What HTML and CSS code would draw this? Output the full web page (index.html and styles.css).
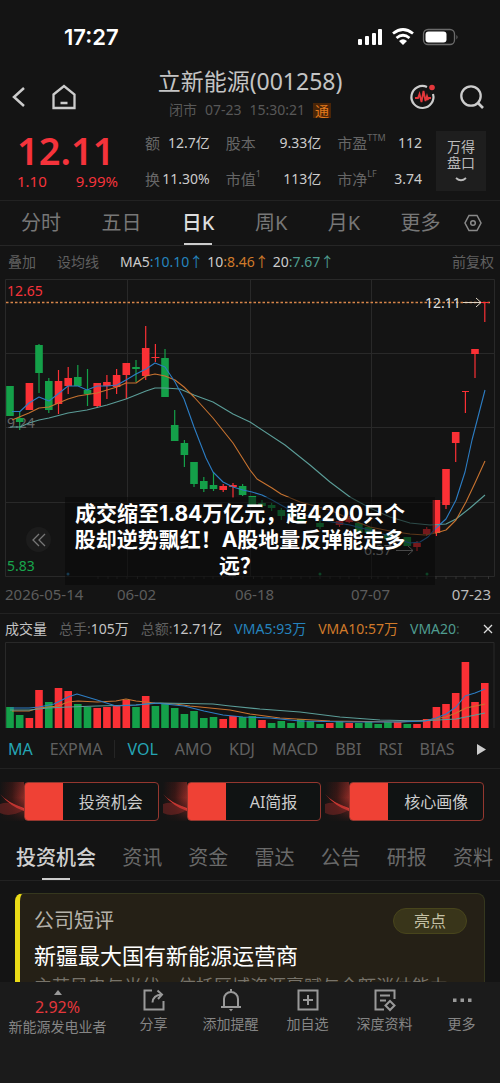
FILE: index.html
```html
<!DOCTYPE html>
<html lang="zh-CN">
<head>
<meta charset="utf-8">
<meta name="viewport" content="width=device-width, initial-scale=1">
<title>立新能源(001258)</title>
<link rel="stylesheet" href="styles.css">
</head>
<body>
<div class="app">
  <div class="status">
    <span class="clock">17:27</span>
    <svg class="status-icons" width="102" height="20" viewBox="0 0 102 20" aria-hidden="true">
      <g fill="#fff">
        <rect x="1" y="12" width="4" height="6" rx="1"/><rect x="8" y="9" width="4" height="9" rx="1"/><rect x="15" y="6" width="4" height="12" rx="1"/><rect x="21" y="2" width="4" height="16" rx="1"/>
        <path d="M46 18l-4-4q4-3.400 8 0z"/>
      </g>
      <path d="M36 6.500q10-8 20 0M39.500 11q6.500-5.500 13 0" fill="none" stroke="#fff" stroke-width="2.800"/>
      <rect x="66.500" y="2.500" width="31" height="15" rx="4.500" fill="none" stroke="#6b6b6b" stroke-width="1.300"/>
      <rect x="68.500" y="4.500" width="21" height="11" rx="3" fill="#fff"/>
      <path d="M99.500 8q2 2 0 4.500z" fill="#777"/>
    </svg>
  </div>

  <header class="header">
    <div class="side">
      <button class="icon-btn" aria-label="返回"><svg width="14" height="22" viewBox="0 0 14 22"><path d="M12 2L2 11l10 9" fill="none" stroke="#ccc" stroke-width="2.500"/></svg></button>
      <button class="icon-btn" aria-label="首页"><svg width="26" height="26" viewBox="0 0 26 26"><path d="M2.500 10.500L13 2l10.500 8.500V24h-21zM9.500 19h7" fill="none" stroke="#ccc" stroke-width="2.300"/></svg></button>
    </div>
    <div class="heading">
      <h1>立新能源(001258)</h1>
      <p><span>闭市</span><span>07-23</span><span>15:30:21</span><b>通</b></p>
    </div>
    <div class="side right">
      <button class="icon-btn" aria-label="异动"><svg width="28" height="28" viewBox="0 0 28 28"><path d="M18 4A11 11 0 1 0 24 11" fill="none" stroke="#ccc" stroke-width="2.200"/><path d="M6 15h3l1.500-4 2 8 2-11 2 10 1.500-5 1 3 1-1h2" fill="none" stroke="#e4373b" stroke-width="1.800"/><circle cx="23" cy="4.500" r="2.800" fill="#e4373b"/></svg></button>
      <button class="icon-btn" aria-label="搜索"><svg width="26" height="26" viewBox="0 0 26 26"><circle cx="12" cy="12" r="9.700" fill="none" stroke="#ccc" stroke-width="2.300"/><path d="M18.500 18.500L24 24" stroke="#ccc" stroke-width="2.600"/></svg></button>
    </div>
  </header>

  <section class="quote">
    <div class="price">
      <strong>12.11</strong>
      <div class="change"><span>1.10</span><span>9.99%</span></div>
    </div>
    <dl class="stats">
      <div><dt>额</dt><dd>12.7亿</dd></div>
      <div><dt>股本</dt><dd>9.33亿</dd></div>
      <div><dt>市盈<sup>TTM</sup></dt><dd>112</dd></div>
      <div><dt>换</dt><dd>11.30%</dd></div>
      <div><dt>市值<sup>1</sup></dt><dd>113亿</dd></div>
      <div><dt>市净<sup>LF</sup></dt><dd>3.74</dd></div>
    </dl>
    <button class="panel-btn">万得<br>盘口<svg width="12" height="6" viewBox="0 0 12 6"><path d="M1 1q5 4.500 10 0" fill="none" stroke="#bbb" stroke-width="1.800"/></svg></button>
  </section>

  <nav class="periods">
    <button>分时</button><button>五日</button><button class="on">日K</button><button>周K</button><button>月K</button><button>更多</button>
    <button class="gear" aria-label="设置"><svg width="18" height="18" viewBox="0 0 18 18" fill="none" stroke="#8a8a8a" stroke-width="1.500"><path d="M5 1.500h8L17 9l-4 7.500H5L1 9z"/><circle cx="9" cy="9" r="2.300"/></svg></button>
  </nav>

  <div class="ma-row">
    <button>叠加</button><button>设均线</button>
    <p><span>MA5<i class="blue">:10.10↑</i></span><span>10<i class="orange">:8.46↑</i></span><span>20<i class="teal">:7.67↑</i></span></p>
    <button class="push">前复权</button>
  </div>

  <section class="kline">
    <svg class="plot" viewBox="0 275 500 304" role="img" aria-label="日K线">
      <path class="grid" d="M5.500 279.500H494.500V576.500H5.500zM5.500 353.500H494.500M5.500 427.500H494.500M5.500 502.500H494.500M127.500 280V576M250.500 280V576M371.500 280V576"/>
      <text class="t red-t" x="7" y="296">12.65</text>
      <text class="t dim-t" x="7" y="428">9.24</text>
      <text class="t green-t" x="7" y="571">5.83</text>
      <path class="dash" d="M6 302.500H492"/>
      <g class="wick up"><path d="M58.500 370V414M68.200 367V394M97.200 383V408M106.900 375V399M116.600 369V394M126.300 363V399M145.700 326V380M155.400 344V362M223.200 484V492M233 483V498M339.500 519V527M349.200 516V523M417 541V551M426.700 527V536M436.400 500V536M446 469V509M455.700 432V462M465.400 391V413M475 349V378M484.800 302V322M151.400 357.500h8M462 391.500h7M481 302.500h8"/></g>
      <g class="wick down"><path d="M19.700 412V430M39 344V393M48.800 378V413M77.800 365V386M87.500 369V406M136 360V382M165 349V397M174.700 410V441M184.400 440V467M194 462V487M203.800 477V492M213.500 472V491M242.600 484V496M262 500V508M271.600 503V511M281.300 508V520M320 521V529M358.800 523V534"/></g>
      <path class="body up" d="M29.400 383V410M58.500 381V404M68.200 378V386M97.200 383V406M106.900 382V386M116.600 375V387M126.300 363V375M145.700 348V376M223.200 486V490M233 485V487M339.500 521V525M349.200 518V522M417 543V547M426.700 529V534M436.400 500V533M446 469V505M455.700 432V443M475 349V354"/>
      <path class="body down" d="M10 386V416M19.700 418V422M39 345V373M48.800 381V410M77.800 377V386M87.500 390V394M136 367V369M165 358V397M174.700 425V441M184.400 443V455M194 462V484M203.800 481V489M213.500 485V489M242.600 486V495M252.300 496V505M262 503V506M271.600 505V508M281.300 510V516M291 513V517M300.700 517V521M320 523V527M358.800 523V533M368.500 527V533M387.900 534V539M407.300 537V546"/>
      <path class="line teal-l" d="M10 427L20 427L29 423L39 420L49 418L68 413L87 410L107 405L126 399L146 391L155 388L165 388L180 389L194 395L213 402L233 414L250 422L285 445L310 465L330 482L350 497L370 508L390 517L410 523L430 525L446 524L456 519L470 508L485 495"/>
      <path class="line orange-l" d="M12 420L29 413L39 408L49 407L68 399L78 396L97 393L117 387L126 383L136 383L146 376L155 374L165 376L175 380L184 387L194 397L204 408L213 418L233 443L250 470L257 479L272 488L281 494L300 502L330 510L352 520L370 527L390 531L410 534L425 535L436 533L446 530L456 520L466 502L475 483L485 461"/>
      <path class="line blue-l" d="M12 411.500H20L29 403L39 397L49 401L58 394L68 386H78L87 390L97 386H107L117 385L126 380L136 374L146 369L155 363L165 367L175 382L184 399L194 427L199 440L206 458L213 472L223 482L233 487L243 490L252 492L262 495L272 500L290 510L320 520L350 525L380 533L400 540L410 543L420 542L428 537L436 528L446 519L456 500L465 472L472 440L485 390"/>
      <text class="t light-t" x="425" y="308">12.11</text>
      <path class="arrow" d="M463 302.500H481M476 298L481 302.500L476 307"/>
      <text class="t gray-t" x="364" y="555">6.37</text>
      <path class="arrow dim" d="M396 550.500H413M408 546L413 550.500L408 555"/>
      <g class="ticks"><path d="M98 576V581M108 576V581M117 576V581M127 576V581M137.500 576V582M146 576V581M156 576V581M165 576V581M175 576V581M184 576V581M194 576V581M204 576V581M213 576V581M223 576V581M233 576V581M243 576V581M253.500 576V582M262 576V581M272 576V581M281 576V581M291 576V581M301 576V581M310 576V581M320 576V581M330 576V581M340 576V581M349 576V581M359 576V581M371.500 576V582M378 576V581M388 576V581M398 576V581M407 576V581M417 576V581M427 576V581M436 576V581M446 576V581M456 576V581M465 576V581M475 576V581M488.500 576V582"/></g>
      <circle cx="68" cy="574" r="1.500" fill="#2878a8"/><circle cx="320" cy="574" r="1.500" fill="#148b4b"/><circle cx="427" cy="574" r="1.500" fill="#148b4b"/>
    </svg>
    <button class="back" aria-label="更早"><svg width="14" height="14" viewBox="0 0 14 14"><path d="M7 1L1 7l6 6M13 1L7 7l6 6" fill="none" stroke="#777" stroke-width="1.300"/></svg></button>
    <p class="caption">成交缩至1.84万亿元，超4200只个<br>股却逆势飘红！A股地量反弹能走多<br>远？</p>
    <div class="dates"><span>2026-05-14</span><span>06-02</span><span>06-18</span><span>07-07</span><span class="last">07-23</span></div>
  </section>

  <section class="volume">
    <div class="vol-row">
      <span class="lit">成交量</span><span>总手:<em>105万</em></span><span>总额:<em>12.71亿</em></span><span class="blue">VMA5:93万</span><span class="orange">VMA10:57万</span><span class="teal">VMA20<i class="cut">:</i></span>
      <button aria-label="关闭"><svg width="10" height="10" viewBox="0 0 10 10"><path d="M1 1l8 8M9 1L1 9" stroke="#ddd" stroke-width="1.300"/></svg></button>
    </div>
    <svg class="plot" viewBox="0 641 500 89" role="img" aria-label="成交量">
      <path class="grid" d="M5.500 728V642.500H494V728"/>
      <path class="body down" d="M10 707V728M19.700 715V728M48.800 702V728M77.800 704V728M87.500 707V728M136 707V728M155.400 706V728M165 704V728M174.700 708V728M184.400 714V728M194 711V728M203.800 718V728M213.500 717V728M242.600 717V728M252.300 716V728M271.600 723V728M281.300 721V728M291 723V728M300.700 719V728M310.400 721V728M320 724V728M339.500 721V728M358.800 723V728M368.500 721V728M378.200 724V728M387.900 722V728M407.300 724V728"/>
      <path class="body up" d="M29.400 718V728M39 690V728M58.500 688V728M68.200 691V728M97.200 708V728M106.900 707V728M116.600 706V728M126.300 700V728M145.700 696V728M223.200 719V728M233 716V728M262 720V728M329.800 723V728M349.200 723V728M397.600 722V728M417 724V728M426.700 719V728M436.400 707V728M446 704V728M455.700 693V728M465.400 662V728M475 702V728M484.800 683V728"/>
      <path class="line orange-l" d="M12 711H29L39 708L58 706L68 702L78 701L97 702L116 701L126 699L136 701L155 703L175 704L190 706L210 708L230 710L250 714L280 718L330 721L400 722L428 720L446 717L456 713L466 708L485 704"/>
      <path class="line teal-l" d="M10 710L29 710L48 708L68 707L97 706L136 705L160 703L213 704L230 706L260 709L300 712L340 717L380 720L420 721L456 719L485 713"/>
      <path class="line blue-l" d="M10 708L29 708L39 707L54 704L68 697L77 694L87 697L97 700L116 706L136 705L155 703L184 706L204 711L223 715L243 717L270 718L300 721L350 722L400 722L425 721L436 718L446 714L456 707L465 696L475 693L485 689"/>
    </svg>
    <nav class="indicators">
      <button class="on">MA</button><button>EXPMA</button><span class="sep"></span><button class="on">VOL</button><button>AMO</button><button>KDJ</button><button>MACD</button><button>BBI</button><button>RSI</button><button>BIAS</button>
      <button class="more" aria-label="更多指标"><svg width="9" height="11" viewBox="0 0 9 11"><path d="M0 0l9 5.500L0 11z" fill="#ccc"/></svg></button>
    </nav>
  </section>

  <div class="promos">
    <div class="promo"><svg width="24" height="39" viewBox="0 0 24 39" aria-hidden="true"><defs><linearGradient id="glow"><stop offset="0" stop-color="#141414"/><stop offset=".5" stop-color="#3a1715"/><stop offset="1" stop-color="#8c2b26"/></linearGradient><linearGradient id="fade" x2="0" y2="1"><stop offset="0" stop-color="#141414" stop-opacity=".3"/><stop offset=".4" stop-color="#141414" stop-opacity="0"/><stop offset="1" stop-color="#141414" stop-opacity=".95"/></linearGradient></defs><path fill="url(#glow)" d="M0 0h24v39H0z"/><path fill="url(#fade)" d="M0 0h24v39H0z"/><path d="M0 12Q8 21 24 26V29Q11 25 0 12z" fill="#d33a34"/><path d="M0 22Q12 18 24 28Q10 36 0 31z" fill="#a52e2a" opacity=".4"/></svg><button>投资机会</button></div>
    <div class="promo"><svg width="24" height="39" viewBox="0 0 24 39" aria-hidden="true"><path fill="url(#glow)" d="M0 0h24v39H0z"/><path fill="url(#fade)" d="M0 0h24v39H0z"/><path d="M0 12Q8 21 24 26V29Q11 25 0 12z" fill="#d33a34"/><path d="M0 22Q12 18 24 28Q10 36 0 31z" fill="#a52e2a" opacity=".4"/></svg><button>AI简报</button></div>
    <div class="promo"><svg width="24" height="39" viewBox="0 0 24 39" aria-hidden="true"><path fill="url(#glow)" d="M0 0h24v39H0z"/><path fill="url(#fade)" d="M0 0h24v39H0z"/><path d="M0 12Q8 21 24 26V29Q11 25 0 12z" fill="#d33a34"/><path d="M0 22Q12 18 24 28Q10 36 0 31z" fill="#a52e2a" opacity=".4"/></svg><button>核心画像</button></div>
  </div>

  <nav class="sections">
    <button class="on">投资机会</button><button>资讯</button><button>资金</button><button>雷达</button><button>公告</button><button>研报</button><button>资料</button>
  </nav>

  <main class="feed">
    <article class="card">
      <div class="card-head"><h2>公司短评</h2><span class="badge">亮点</span></div>
      <h3>新疆最大国有新能源运营商</h3>
      <p>主营风电与光伏，依托区域资源禀赋与全额消纳能力</p>
    </article>
  </main>

  <footer class="toolbar">
    <button class="sector"><svg width="8" height="5" viewBox="0 0 8 5"><path d="M4 0l4 5H0z" fill="#999"/></svg><b>2.92%</b><span>新能源发电业者</span></button>
    <button><svg width="24" height="24" viewBox="0 0 24 24"><path d="M10 2.500H2.500v19h19V13M10.500 14.500Q11 7 20 6.500M15.500 2.500L20 6.500l-4 4.500" fill="none" stroke="#999" stroke-width="2"/></svg><span>分享</span></button>
    <button><svg width="24" height="24" viewBox="0 0 24 24"><path d="M2 19h20M5 19V11a7 7 0 0 1 14 0v8M12 4V1" fill="none" stroke="#999" stroke-width="2"/><path d="M10 21h4l-2 2.500z" fill="#999"/></svg><span>添加提醒</span></button>
    <button><svg width="24" height="24" viewBox="0 0 24 24"><path d="M2.500 2.500h19v19h-19zM12 7v10M7 12h10" fill="none" stroke="#999" stroke-width="2"/></svg><span>加自选</span></button>
    <button><svg width="24" height="24" viewBox="0 0 24 24"><path d="M21.500 11V2.500h-19v19H11M7 7.500h10M7 12.500h6M17 13l4.500 4.500L17 22l-4.500-4.500z" fill="none" stroke="#999" stroke-width="2"/></svg><span>深度资料</span></button>
    <button><svg width="24" height="24" viewBox="0 0 24 24"><path d="M3 10.500h3.500V14H3zM10.500 10.500H14V14h-3.500zM18 10.500h3.500V14H18z" fill="#999"/></svg><span>更多</span></button>
  </footer>
</div>
</body>
</html>
```
FILE: styles.css
```css
* { box-sizing: border-box; margin: 0; padding: 0; }
body {
  background: #141414;
  color: #ccc;
  font-family: "Noto Sans", "Noto Sans CJK SC", sans-serif;
  font-size: 14px;
  line-height: 20px;
}
button { background: none; border: 0; color: inherit; font: inherit; white-space: nowrap; }
svg { display: block; flex: none; }
i, em { font-style: normal; }
.app { height: 100vh; display: flex; flex-direction: column; overflow: hidden; }
.app > * { flex: none; }
.blue, .ma-row .blue { color: #2583bd; }
.orange, .ma-row .orange { color: #d07a2a; }
.teal, .ma-row .teal { color: #4f9c90; }

.status { height: 64px; padding: 10px 41px 0 64px; display: flex; align-items: center; justify-content: space-between; }
.clock { color: #fff; font: 600 22px/26px Inter, sans-serif; }

.header { height: 62px; padding: 0 15px 0 12px; display: flex; justify-content: space-between; }
.side { display: flex; align-items: center; gap: 25px; width: 79px; padding-top: 3px; }
.side.right { gap: 22px; width: 76px; }
.heading { text-align: center; }
.heading h1 { font-size: 23px; font-weight: 400; line-height: 34px; color: #c4c4c4; }
.heading p { display: flex; align-items: center; justify-content: center; gap: 8px; color: #585858; line-height: 24px; }
.heading b { padding: 0 2px; font-weight: 400; line-height: 15px; color: #e27a1c; background: #4a2508; }

.quote { padding: 5px 14px 9px 17px; display: flex; align-items: center; }
.price { width: 101px; color: #f5333b; }
.price strong { display: block; font-size: 38px; font-weight: 600; line-height: 38px; }
.change { display: flex; justify-content: space-between; margin-top: 2px; font-size: 15px; line-height: 20px; }
.stats { flex: 1; margin: 0 14px 0 27px; display: grid; grid-template-columns: 65fr 96fr 85fr; column-gap: 16px; row-gap: 16px; font-size: 15px; }
.stats div { display: flex; justify-content: space-between; white-space: nowrap; }
.stats dt { color: #666; }
.stats dd { color: #ccc; font-size: 14px; }
.stats sup { font-size: 9px; line-height: 9px; vertical-align: top; }
.panel-btn { width: 50px; height: 60px; display: flex; flex-direction: column; align-items: center; justify-content: center; background: #1e1e1e; line-height: 16px; color: #bbb; }
.panel-btn svg { margin-top: 6px; }

.periods { height: 46px; padding: 0 18px 0 21px; display: flex; justify-content: space-between; border-top: 1px solid #222; border-bottom: 1px solid #262626; font-size: 20px; color: #777; }
.periods .gear { margin-left: -17px; }
.periods .on { position: relative; color: #ddd; font-weight: 500; }
.periods .on::after, .sections .on::after { content: ""; position: absolute; left: 50%; bottom: 0; width: 28px; height: 2px; margin-left: -14px; background: #ccc; }

.ma-row { height: 29px; padding: 2px 6px 0 8px; display: flex; align-items: center; gap: 21px; color: #606060; }
.ma-row p { display: flex; gap: 4px; color: #ccc; }
.push { margin-left: auto; }

.kline { position: relative; }
.plot { width: 100%; height: auto; }
.grid { fill: none; stroke: #292929; }
.dash { stroke: #d9864a; stroke-width: 1.300; stroke-dasharray: 2.500 2; }
.wick, .body, .line, .arrow, .ticks { fill: none; }
.wick { stroke-width: 1.200; }
.body { stroke-width: 7.600; }
.up { stroke: #fb3035; }
.down { stroke: #14a049; }
.line { stroke-width: 1.100; stroke-linejoin: round; }
.blue-l { stroke: #2c7dc4; }
.orange-l { stroke: #c87330; }
.teal-l { stroke: #5b9d98; }
.arrow { stroke: #e0d5c5; }
.arrow.dim { stroke: #999; }
.ticks { stroke: #333; }
.t { font-size: 14px; }
.red-t { fill: #f5333b; }
.green-t { fill: #18a54c; }
.dim-t { fill: #666; }
.light-t { fill: #ddd; }
.gray-t { fill: #999; }
.back { position: absolute; left: 26px; top: 252px; width: 25px; height: 25px; border-radius: 50%; background: #1c1c1c; display: grid; place-items: center; }
.caption { position: absolute; left: 13%; top: 222px; width: 74%; padding: 4px 20px 6px 0; background: rgba(8, 8, 8, .55); color: #fff; font-family: Inter, "Noto Sans CJK SC", sans-serif; font-size: 21px; font-weight: 700; line-height: 26px; text-align: center; white-space: nowrap; }
.dates { padding: 5px 9px 9px 5px; display: grid; grid-template-columns: 112fr 118fr 116fr 101fr 39fr; font-size: 15px; color: #5c5c5c; white-space: nowrap; }
.dates .last { color: #bbb; }

.volume { border-top: 1px solid #222; border-bottom: 1px solid #222; }
.vol-row { height: 27px; padding: 2px 7px 0 5px; display: flex; align-items: center; gap: 12px; color: #606060; white-space: nowrap; }
.lit, .vol-row em { color: #c4c4c4; }
.vol-row button { margin-left: auto; }
.cut { opacity: .5; }
.indicators { height: 38px; padding: 0 14px 0 8px; display: flex; align-items: center; gap: 17px; font-size: 16px; color: #606060; }
.indicators .on { color: #25a5b5; }
.sep { width: 1px; height: 18px; margin: 0 -5px; background: #252525; }
.more { margin-left: auto; }

.promos { padding: 13px 16px 0 0; display: grid; grid-template-columns: repeat(3, 1fr); gap: 4px; }
.promo { display: flex; }
.promo button { flex: 1; height: 39px; padding-left: 39px; border: 1px solid #94372f; border-radius: 4px; background: linear-gradient(to right, #ef4135 38px, #101313 38px); font-size: 16px; color: #ccc; }

.sections { height: 60px; padding: 14px 7px 0 16px; display: flex; justify-content: space-between; border-bottom: 1px solid #222; font-size: 20px; color: #6a6a6a; }
.sections .on { position: relative; color: #d0d0d0; font-weight: 500; }

.app > .feed { flex: 1 1 0; min-height: 0; overflow: hidden; padding: 12px 15px 0; }
.card { height: 130px; padding: 13px 17px 0 14px; border: 1px solid #35371e; border-left: 5px solid #eadb17; border-radius: 8px; background: #252016; }
.card-head { display: flex; align-items: center; justify-content: space-between; }
.card h2 { font-size: 20px; font-weight: 400; line-height: 28px; color: #b5b2aa; }
.badge { width: 74px; border: 1px solid #48451c; border-radius: 13px; background: #39351a; color: #c5c1a6; font-size: 16px; line-height: 24px; text-align: center; }
.card h3 { margin-top: 4px; font-size: 22px; font-weight: 400; line-height: 32px; color: #fff; white-space: nowrap; }
.card p { margin-top: 2px; font-size: 18px; line-height: 26px; color: #77736a; white-space: nowrap; overflow: hidden; }

.toolbar { height: 101px; display: grid; grid-template-columns: 23% repeat(5, 1fr); align-items: start; background: #1b1b1b; color: #858585; }
.toolbar button { display: flex; flex-direction: column; align-items: center; gap: 2px; padding-top: 6px; }
.toolbar .sector { gap: 0; padding-top: 8px; }
.sector b { margin-top: 2px; color: #e4373b; font-size: 16px; font-weight: 400; line-height: 20px; }
```
